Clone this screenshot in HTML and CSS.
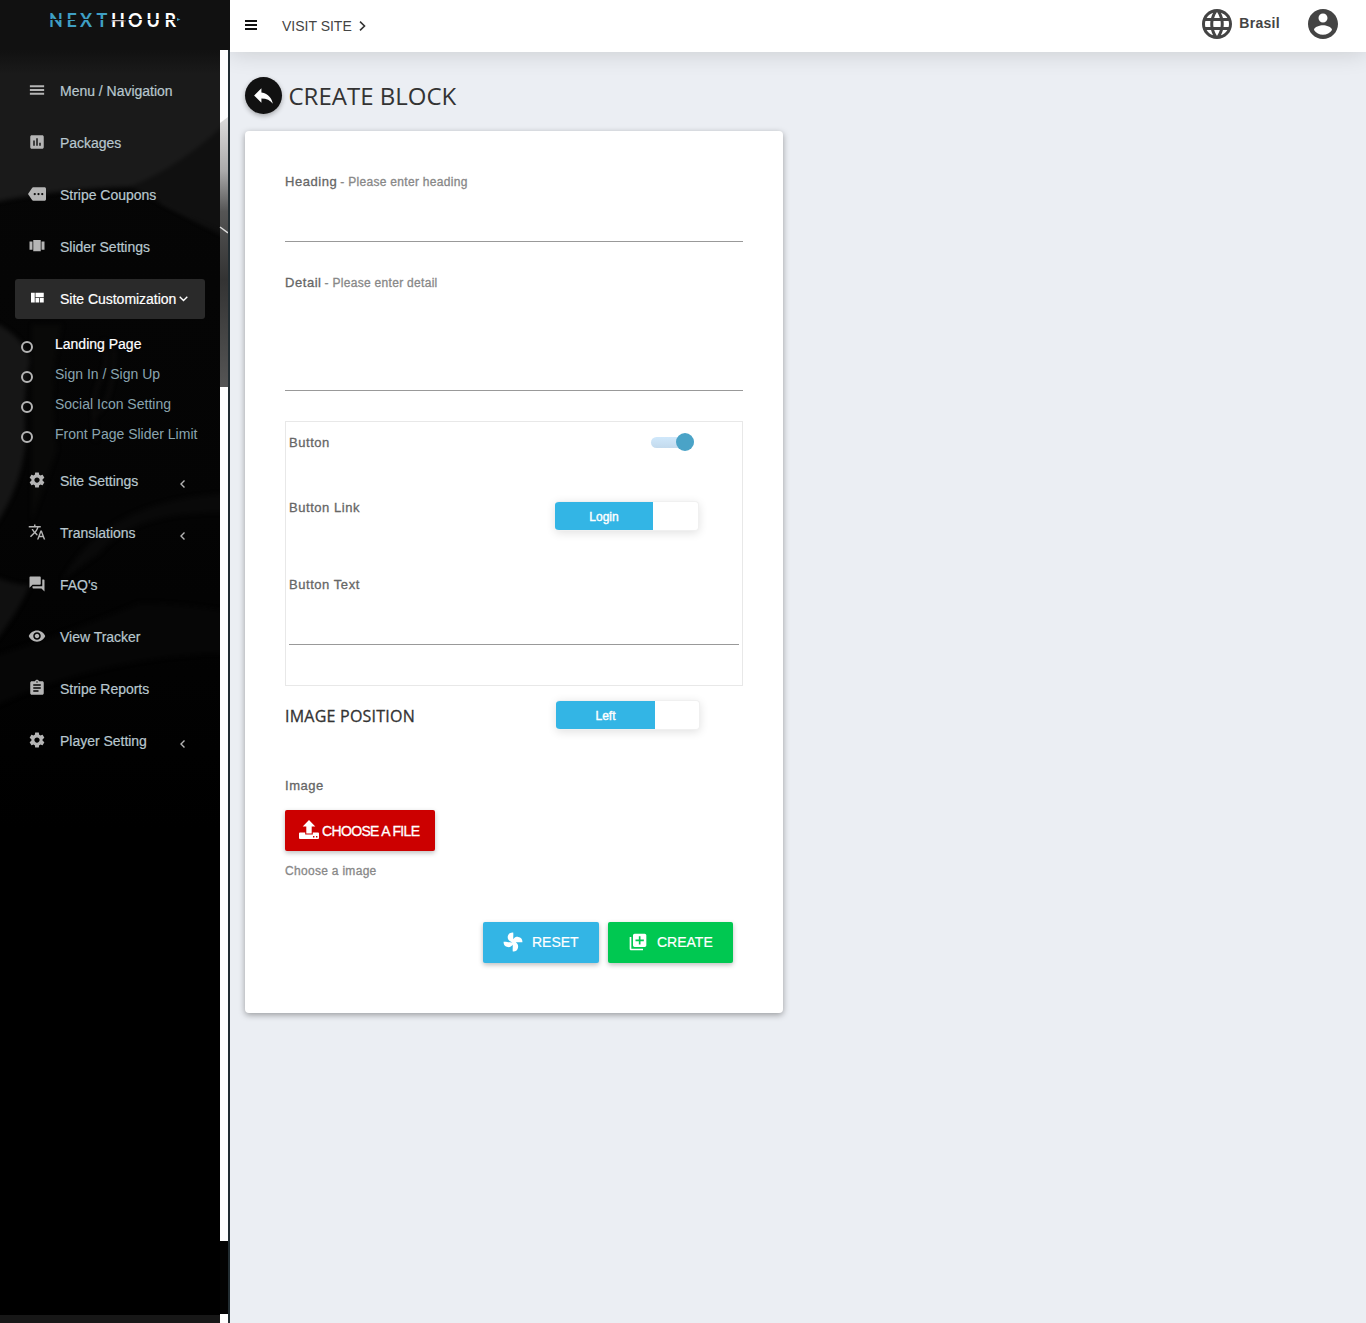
FILE: index.html
```html
<!DOCTYPE html>
<html lang="en">
<head>
<meta charset="utf-8">
<title>Create Block</title>
<link rel="stylesheet" href="styles.css">
</head>
<body>
<svg width="0" height="0" class="sprite" aria-hidden="true">
  <symbol id="menu" viewBox="0 0 24 24"><path d="M2.500 18.300h19v-2.600h-19v2.600zm0-5h19v-2.600h-19v2.600zm0-7.600v2.600h19V5.700h-19z"/></symbol>
  <symbol id="chart" viewBox="0 0 24 24"><path d="M19 3H5c-1.1 0-2 .9-2 2v14c0 1.1.9 2 2 2h14c1.1 0 2-.9 2-2V5c0-1.1-.9-2-2-2zM9 17H7v-7h2v7zm4 0h-2V7h2v10zm4 0h-2v-4h2v4z"/></symbol>
  <symbol id="more" viewBox="0 0 24 24"><path d="M22 3H7c-.69 0-1.23.35-1.59.88L0 12l5.41 8.11c.36.53.97.89 1.66.89H22c1.1 0 2-.9 2-2V5c0-1.1-.9-2-2-2zM9 13.500c-.83 0-1.500-.67-1.500-1.500s.67-1.500 1.500-1.500 1.500.67 1.500 1.500-.67 1.500-1.500 1.500zm5 0c-.83 0-1.500-.67-1.500-1.500s.67-1.500 1.500-1.500 1.500.67 1.500 1.500-.67 1.500-1.500 1.500zm5 0c-.83 0-1.500-.67-1.500-1.500s.67-1.500 1.500-1.500 1.500.67 1.500 1.500-.67 1.500-1.500 1.500z"/></symbol>
  <symbol id="carousel" viewBox="0 0 24 24"><path d="M7 19h10V4H7v15zm-5-2h4V6H2v11zM18 6v11h4V6h-4z"/></symbol>
  <symbol id="quilt" viewBox="0 0 24 24"><path d="M10 18h5v-6h-5v6zm-6 0h5V5H4v13zm12 0h5v-6h-5v6zM10 5v6h11V5H10z"/></symbol>
  <symbol id="gear" viewBox="0 0 24 24"><path d="M19.430 12.980c.04-.32.07-.64.07-.98s-.03-.66-.07-.98l2.110-1.650c.19-.15.24-.42.12-.64l-2-3.460c-.12-.22-.39-.3-.61-.22l-2.490 1c-.52-.4-1.080-.73-1.690-.98l-.38-2.650C14.460 2.180 14.250 2 14 2h-4c-.25 0-.46.18-.49.42l-.38 2.650c-.61.25-1.170.59-1.690.98l-2.490-1c-.23-.09-.49 0-.61.22l-2 3.460c-.13.22-.07.49.12.64l2.110 1.650c-.04.32-.07.65-.07.98s.03.66.07.98l-2.110 1.650c-.19.15-.24.42-.12.64l2 3.460c.12.22.39.3.61.22l2.490-1c.52.4 1.080.73 1.690.98l.38 2.650c.03.24.24.42.49.42h4c.25 0 .46-.18.49-.42l.38-2.650c.61-.25 1.170-.59 1.690-.98l2.490 1c.23.09.49 0 .61-.22l2-3.460c.12-.22.07-.49-.12-.64l-2.110-1.650zM12 15.500c-1.930 0-3.500-1.570-3.500-3.500s1.570-3.500 3.500-3.500 3.500 1.570 3.500 3.500-1.570 3.500-3.500 3.500z"/></symbol>
  <symbol id="translate" viewBox="0 0 24 24"><path d="M12.870 15.070l-2.540-2.510.03-.03c1.740-1.940 2.980-4.170 3.710-6.530H17V4h-7V2H8v2H1v1.990h11.170C11.500 7.920 10.440 9.750 9 11.350 8.070 10.320 7.300 9.190 6.690 8h-2c.73 1.630 1.730 3.170 2.980 4.560l-5.090 5.020L4 19l5-5 3.110 3.110.76-2.040zM18.500 10h-2L12 22h2l1.120-3h4.750L21 22h2l-4.500-12zm-2.620 7l1.620-4.330L19.120 17h-3.240z"/></symbol>
  <symbol id="forum" viewBox="0 0 24 24"><path d="M21 6h-2v9H6v2c0 .55.45 1 1 1h11l4 4V7c0-.55-.45-1-1-1zm-4 6V3c0-.55-.45-1-1-1H3c-.55 0-1 .45-1 1v14l4-4h10c.55 0 1-.45 1-1z"/></symbol>
  <symbol id="eye" viewBox="0 0 24 24"><path d="M12 4.500C7 4.500 2.730 7.610 1 12c1.730 4.390 6 7.500 11 7.500s9.270-3.110 11-7.500c-1.730-4.390-6-7.500-11-7.500zM12 17c-2.760 0-5-2.240-5-5s2.240-5 5-5 5 2.240 5 5-2.240 5-5 5zm0-8c-1.660 0-3 1.340-3 3s1.340 3 3 3 3-1.340 3-3-1.340-3-3-3z"/></symbol>
  <symbol id="clipboard" viewBox="0 0 24 24"><path d="M19 3h-4.180C14.400 1.840 13.300 1 12 1c-1.300 0-2.400.84-2.820 2H5c-1.100 0-2 .9-2 2v14c0 1.100.9 2 2 2h14c1.100 0 2-.9 2-2V5c0-1.100-.9-2-2-2zm-7 0c.55 0 1 .45 1 1s-.45 1-1 1-1-.45-1-1 .45-1 1-1zm2 14H7v-2h7v2zm3-4H7v-2h10v2zm0-4H7V7h10v2z"/></symbol>
  <symbol id="globe" viewBox="0 0 24 24"><path d="M11.990 2C6.470 2 2 6.480 2 12s4.470 10 9.990 10C17.520 22 22 17.520 22 12S17.520 2 11.990 2zm6.930 6h-2.950c-.32-1.250-.78-2.450-1.380-3.560 1.840.63 3.370 1.910 4.330 3.560zM12 4.040c.83 1.200 1.480 2.530 1.910 3.960h-3.820c.43-1.430 1.080-2.760 1.910-3.960zM4.260 14C4.100 13.360 4 12.690 4 12s.1-1.360.26-2h3.380c-.08.66-.14 1.320-.14 2s.06 1.340.14 2H4.260zm.82 2h2.950c.32 1.250.78 2.450 1.380 3.560-1.840-.63-3.370-1.900-4.330-3.560zm2.950-8H5.080c.96-1.660 2.490-2.930 4.330-3.560C8.810 5.550 8.350 6.750 8.030 8zM12 19.960c-.83-1.200-1.480-2.530-1.910-3.960h3.820c-.43 1.430-1.080 2.760-1.910 3.960zM14.340 14H9.660c-.09-.66-.16-1.320-.16-2s.07-1.350.16-2h4.680c.09.65.16 1.320.16 2s-.07 1.340-.16 2zm.25 5.560c.6-1.110 1.060-2.310 1.380-3.560h2.950c-.96 1.650-2.490 2.930-4.330 3.560zM16.360 14c.08-.66.14-1.320.14-2s-.06-1.340-.14-2h3.380c.16.64.26 1.310.26 2s-.1 1.360-.26 2h-3.380z"/></symbol>
  <symbol id="account" viewBox="0 0 24 24"><path d="M12 2C6.480 2 2 6.480 2 12s4.480 10 10 10 10-4.480 10-10S17.520 2 12 2zm0 3c1.660 0 3 1.340 3 3s-1.340 3-3 3-3-1.340-3-3 1.340-3 3-3zm0 14.200c-2.500 0-4.710-1.280-6-3.220.03-1.990 4-3.080 6-3.080 1.990 0 5.970 1.090 6 3.080-1.290 1.940-3.500 3.220-6 3.220z"/></symbol>
  <symbol id="reply" viewBox="0 0 24 24"><path d="M10 9V5l-7 7 7 7v-4.100c5 0 8.500 1.600 11 5.100-1-5-4-10-11-11z"/></symbol>
  <symbol id="fan" viewBox="0 0 20 20"><path d="M9.500 10.500C6.500 9.500 4.500 7.500 4.700 4.800 4.900 1.800 7 .500 10.200.600 10.600 3 10 4.600 10.400 7.200 11.500 5.200 13.300 4.700 15.200 4.900 18.200 5.200 19.600 7.300 19.400 10.200 17 10.600 15.400 10 12.800 10.400 14.800 11.500 15.300 13.300 15.100 15.200 14.800 18.200 12.700 19.600 9.800 19.400 9.400 17 10 15.400 9.600 12.800 8.500 14.800 6.700 15.300 4.800 15.100 1.800 14.800.4 12.700.6 9.800 3 9.400 5 10.300 9.500 10.500z"/></symbol>
  <symbol id="library" viewBox="0 0 24 24"><path d="M4 6H2v14c0 1.100.9 2 2 2h14v-2H4V6zm16-4H8c-1.100 0-2 .9-2 2v12c0 1.100.9 2 2 2h12c1.100 0 2-.9 2-2V4c0-1.100-.9-2-2-2zm-1 9h-4v4h-2v-4H9V9h4V5h2v4h4v2z"/></symbol>
  <symbol id="upload" viewBox="0 0 20 19"><path d="M10 0l6.300 6.500h-3.600v7H7.300v-7H3.700zM1 12.500h5.200v2.100h7.600v-2.100H19q1 0 1 1V18q0 1-1 1H1q-1 0-1-1v-4.500q0-1 1-1zM14 16v1.400h1.400V16zm3 0v1.400h1.400V16z"/></symbol>
</svg>

<div class="layout">
  <aside class="sidebar">
    <svg class="backdrop" width="228" height="1323" viewBox="0 0 228 1323" aria-hidden="true">
      <defs>
        <linearGradient id="fade" x1="0" y1="0" x2="0" y2="1"><stop offset="0" stop-color="#060606"/><stop offset=".6" stop-color="#040404"/><stop offset="1" stop-color="#000"/></linearGradient>
        <linearGradient id="edge" x1="0" y1="0" x2="0" y2="1"><stop offset="0" stop-color="#ddd"/><stop offset=".2" stop-color="#aaa"/><stop offset=".35" stop-color="#555"/><stop offset=".6" stop-color="#333"/><stop offset="1" stop-color="#555"/></linearGradient>
        <linearGradient id="top" x1="0" y1="0" x2="0" y2="1"><stop offset="0" stop-color="#111"/><stop offset="1" stop-color="#1a1a1a"/></linearGradient>
        <filter id="soft" filterUnits="userSpaceOnUse" x="-20" y="30" width="260" height="800" color-interpolation-filters="sRGB"><feGaussianBlur stdDeviation="2"/></filter>
      </defs>
      <rect width="220" height="1323" fill="#000"/>
      <rect y="50" width="220" height="780" fill="url(#fade)"/>
      <g filter="url(#soft)">
        <path d="M-20 20H240v90Q185 166 130 187Q60 188-20 205z" fill="#1a1a1a"/>
        <path d="M240 110v130L160 202 130 187Q185 166 240 110z" fill="#101010"/>
        <path d="M160 202L230 238" stroke="#282828" fill="none"/>
        <path d="M-20 315Q25 335 30 360q-8 40-4 80Q20 500-20 545z" fill="#161616"/>
        <path d="M32 325h30q-15 60-5 125l-25 70z" fill="#090908"/>
        <path d="M104 340q6 22-4 40t-4 60M114 350q0 50-18 65" stroke="#11100f" fill="none" stroke-width="2"/>
        <path d="M62 580q45-85 178-87v20q-105-5-140 40" fill="#090909"/>
        <path d="M-20 570q30 15 50 15Q15 620-20 660z" fill="#101010"/>
        <path d="M-20 660q70-20 160-57q40 0 100 10v40q-140 0-260 60z" fill="#060606"/>
      </g>
      <rect y="50" width="220" height="24" fill="url(#top)"/>
      <rect x="220" y="50" width="8" height="1273" fill="#fff"/>
      <path d="M220 123l8-6v270h-8z" fill="url(#edge)"/>
      <path d="M220 227l8 6" stroke="#ddd" stroke-width="1.500"/>
      <path d="M220 1241h8v73h-8z" fill="#030303"/>
      <path d="M0 1315h220v8H0z" fill="#171717"/>
    </svg>
    <div class="brand">
      <svg width="140" height="30" viewBox="0 0 140 30">
        <text class="logo-text" y="20"><tspan x="-1 16.500 30 46.500" fill="#3f9fc4">NEXT</tspan><tspan x="61 78 96.500 114.500" fill="#fff">HOUR</tspan></text>
        <path class="logo-cut" d="M0 12.500H126"/>
        <path d="M61 14H76" stroke="#877" stroke-width=".8"/><path d="M127 11l3.500 1.500-3.500 1.500z" fill="#3f9fc4"/>
      </svg>
    </div>
    <nav class="nav">
      <a class="item"><svg><use href="#menu"/></svg>Menu / Navigation</a>
      <a class="item"><svg><use href="#chart"/></svg>Packages</a>
      <a class="item"><svg><use href="#more"/></svg>Stripe Coupons</a>
      <a class="item"><svg><use href="#carousel"/></svg>Slider Settings</a>
      <a class="item active"><svg><use href="#quilt"/></svg>Site Customization<svg class="down" viewBox="0 0 9 6"><path d="M.7.700l3.800 3.800L8.300.7"/></svg></a>
      <div class="sub">
        <a class="current"><i></i>Landing Page</a>
        <a><i></i>Sign In / Sign Up</a>
        <a><i></i>Social Icon Setting</a>
        <a><i></i>Front Page Slider Limit</a>
      </div>
      <a class="item"><svg><use href="#gear"/></svg>Site Settings<svg class="left" viewBox="0 0 5 8"><path d="M4.500.5L1 4l3.500 3.500"/></svg></a>
      <a class="item"><svg><use href="#translate"/></svg>Translations<svg class="left" viewBox="0 0 5 8"><path d="M4.500.5L1 4l3.500 3.500"/></svg></a>
      <a class="item"><svg><use href="#forum"/></svg>FAQ's</a>
      <a class="item"><svg><use href="#eye"/></svg>View Tracker</a>
      <a class="item"><svg><use href="#clipboard"/></svg>Stripe Reports</a>
      <a class="item"><svg><use href="#gear"/></svg>Player Setting<svg class="left" viewBox="0 0 5 8"><path d="M4.500.5L1 4l3.500 3.500"/></svg></a>
    </nav>
  </aside>

  <div class="page">
    <header class="topbar">
      <svg class="burger" viewBox="0 0 12 10"><path d="M0 0h12v2H0zM0 4h12v2H0zM0 8h12v2H0z"/></svg>
      <a class="visit">VISIT SITE</a>
      <svg class="go" viewBox="0 0 8 10"><path d="M1 .700L5.500 5 1 9.300"/></svg>
      <svg class="globe"><use href="#globe"/></svg>
      <span class="lang">Brasil</span>
      <svg class="account"><use href="#account"/></svg>
    </header>
    <main>
      <div class="heading">
        <a class="back"><svg><use href="#reply"/></svg></a>
        <h1>CREATE BLOCK</h1>
      </div>
      <form class="card">
        <div class="field title"><label>Heading</label><small>- Please enter heading</small></div>
        <div class="field detail"><label>Detail</label><small>- Please enter detail</small></div>
        <section class="box">
          <div class="row toggle-row"><label>Button</label><span class="toggle"></span></div>
          <div class="row link-row"><label>Button Link</label><span class="switch"><b>Login</b></span></div>
          <div class="button-text"><label>Button Text</label></div>
        </section>
        <div class="position"><h2>IMAGE POSITION</h2><span class="switch wide"><b>Left</b></span></div>
        <label class="image-label">Image</label>
        <a class="file"><svg><use href="#upload"/></svg>CHOOSE A FILE</a>
        <small class="hint">Choose a image</small>
        <div class="actions">
          <a class="btn reset"><svg><use href="#fan"/></svg>RESET</a>
          <a class="btn create"><svg><use href="#library"/></svg>CREATE</a>
        </div>
      </form>
    </main>
  </div>
</div>
</body>
</html>
```
FILE: styles.css
```css
* { box-sizing: border-box; }
body { margin: 0; font-family: "Liberation Sans", Arial, sans-serif; font-size: 14px; color: #333; }
svg { display: block; flex: none; fill: currentColor; }
.sprite { position: absolute; }
.layout { display: flex; height: 1323px; overflow: hidden; }

.sidebar { position: relative; width: 230px; flex: none; background: #000; border-right: 2px solid #222d32; }
.backdrop { position: absolute; left: 0; top: 0; }
.brand { position: relative; width: 230px; height: 50px; padding: 7px 0 0 50px; background: #111; }
.brand svg { overflow: visible; }
.logo-text { font-family: Lato, sans-serif; font-weight: 700; font-size: 18px; }
.logo-cut { stroke: #111; stroke-width: 1; }
.nav { position: relative; display: flex; flex-direction: column; gap: 12px; width: 220px; padding: 21px 15px; }
.item { display: flex; align-items: center; height: 40px; padding-left: 13px; border-radius: 3px; color: #b8c7ce; letter-spacing: -.02px; white-space: nowrap; -webkit-text-stroke: .2px; }
.item svg { width: 18px; height: 18px; margin: -2px 14px 0 0; color: #b5b5b5; }
.item.active { background: #2a2a2a; color: #fff; }
.item.active svg { color: #fff; }
.item svg.down, .item svg.left { fill: none; stroke: currentColor; stroke-width: 1.400; margin: 0; }
.item svg.down { width: 9px; height: 6px; margin-left: 2.500px; }
.item svg.left { width: 5px; height: 8px; margin: 6px 20px 0 auto; }
.sub { display: flex; flex-direction: column; margin-top: -2px; }
.sub a { display: flex; align-items: center; height: 30px; padding-left: 6px; color: #8aa4af; white-space: nowrap; }
.sub a.current { color: #fff; -webkit-text-stroke: .2px; }
.sub i { width: 12px; height: 12px; margin: 6px 22px 0 0; border: 2px solid #b5b5b5; border-radius: 50%; }

.page { flex: 1; background: #ebeef3; }
.topbar { position: relative; display: flex; align-items: center; height: 52px; padding: 0 25px 4px 15px; background: #fff; color: #444; box-shadow: 0 0 24px rgba(0,0,0,.16); clip-path: inset(0 0 -40px 0); }
.burger { width: 12px; height: 10px; margin: 2px 25px 0 0; color: #111; }
.visit { margin-top: 4px; }
.go { width: 8px; height: 10px; margin: 4px 0 0 7px; fill: none; stroke: #333; stroke-width: 1.600; }
.globe, .account { width: 36px; height: 36px; }
.globe { margin-left: auto; }
.lang { margin: -2px 25px 0 4px; font-weight: 700; letter-spacing: .3px; }
main { padding: 25px 15px; }
.heading { display: flex; align-items: center; gap: 6.500px; height: 37px; }
.back { display: grid; place-items: center; width: 37px; height: 37px; border-radius: 50%; background: #111; color: #fff; box-shadow: 0 2px 5px rgba(0,0,0,.3); }
.back svg { width: 25px; height: 25px; }
h1 { margin: 0; font: 400 24px/30px "Open Sans", sans-serif; }
.card { display: flex; flex-direction: column; width: 538px; height: 882px; margin-top: 17px; padding: 40px; border-radius: 4px; background: #fff; box-shadow: 0 2px 6px rgba(0,0,0,.35); }
label, small { line-height: 21px; -webkit-text-stroke: .3px; }
label { font-size: 13px; color: #666; letter-spacing: .55px; }
small { font-size: 12px; color: #888; letter-spacing: .3px; }
.field { display: flex; align-items: baseline; gap: 3px; border-bottom: 1px solid #999; }
.title { height: 71px; }
.detail { height: 119px; margin-top: 30px; }
.box { display: flex; flex-direction: column; height: 265px; margin-top: 30px; border: 1px solid #e8e8e8; padding: 10px 3px 0; }
.row { display: flex; justify-content: space-between; align-items: flex-start; }
.toggle-row { height: 65px; padding-right: 45px; }
.toggle { position: relative; width: 43px; height: 11px; margin-top: 5px; border-radius: 6px; background: linear-gradient(#d0e8fb, #c3daed); }
.toggle::after { content: ""; position: absolute; right: 0; top: -4px; width: 18px; height: 18px; border-radius: 50%; background: #4aa3c7; }
.link-row { height: 77px; padding-right: 40px; }
.switch { display: flex; width: 144px; height: 30px; margin-top: 4px; border: 1px solid #f0f0f0; border-left: 0; border-radius: 4px; overflow: hidden; background: #fff; box-shadow: 0 2px 10px rgba(0,0,0,.12); }
.switch b { width: 98px; background: #33b5e5; color: #fff; font-weight: 400; font-size: 12px; line-height: 30px; text-align: center; -webkit-text-stroke: .4px; }
.button-text { height: 71px; border-bottom: 1px solid #999; }
.position { display: flex; align-items: flex-start; justify-content: space-between; height: 89px; padding: 14px 43px 0 0; }
.position .switch { margin-top: 0; }
.switch.wide b { width: 99px; }
h2 { margin: 5px 0 0; font: 400 16px/22px "Open Sans", sans-serif; letter-spacing: .23px; -webkit-text-stroke: .3px; }
.image-label { height: 35px; }
.file, .btn { display: flex; align-items: center; height: 41px; border-radius: 2px; color: #fff; box-shadow: 0 2px 5px rgba(0,0,0,.26); white-space: nowrap; }
.file { width: 150px; padding: 1px 0 0 14px; background: #c00; letter-spacing: -.65px; -webkit-text-stroke: .3px; }
.file svg { width: 20px; height: 19px; margin: -4px 3px 0 0; }
.hint { height: 20px; margin-top: 10px; }
.actions { display: flex; justify-content: flex-end; gap: 9px; margin-top: 41px; padding-right: 10px; }
.btn { padding-bottom: 1px; -webkit-text-stroke: .2px; }
.btn svg { width: 20px; height: 20px; margin-right: 9px; }
.reset { width: 116px; padding-left: 20px; background: #33b5e5; }
.create { width: 125px; padding-left: 20px; background: #00c851; }
```
